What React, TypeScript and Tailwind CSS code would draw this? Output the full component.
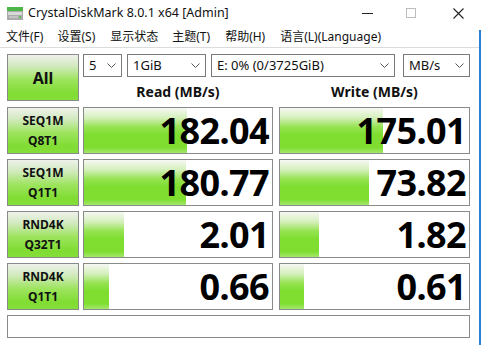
import React from 'react';

const fillBg =
  'bg-[linear-gradient(to_bottom,#f6f8f3_0%,#d4f0bb_22%,#96e352_42%,#7edd2e_60%,#80de31_88%,#a4e86c_100%)]';
const labelBg =
  'bg-[linear-gradient(to_bottom,#eef1eb_0%,#d2eabe_25%,#9de45e_55%,#80dc32_85%,#86de3a_100%)]';

const rows = [
  { l1: 'SEQ1M', l2: 'Q8T1', read: '182.04', rw: 103, write: '175.01', ww: 103 },
  { l1: 'SEQ1M', l2: 'Q1T1', read: '180.77', rw: 102, write: '73.82', ww: 89 },
  { l1: 'RND4K', l2: 'Q32T1', read: '2.01', rw: 40, write: '1.82', ww: 39 },
  { l1: 'RND4K', l2: 'Q1T1', read: '0.66', rw: 25, write: '0.61', ww: 24 },
];

function Chevron() {
  return (
    <svg width="9" height="6" viewBox="0 0 9 6" className="shrink-0">
      <polyline points="0.5,0.5 4.5,4.5 8.5,0.5" fill="none" stroke="#555" strokeWidth="1" />
    </svg>
  );
}

function Combo({ value, className }: { value: string; className: string }) {
  return (
    <div
      className={`h-[23px] border border-[#7a7a7a] bg-white flex items-center justify-between pl-[5px] pr-[5px] text-[13px] text-[#111] ${className}`}
    >
      <span>{value}</span>
      <Chevron />
    </div>
  );
}

function Result({ value, fill, className }: { value: string; fill: number; className: string }) {
  return (
    <div className={`h-[47px] border border-[#8a8a8a] bg-white flex ${className}`}>
      <div className="relative flex-1 flex items-center justify-end pr-[3px]">
        <div className={`absolute left-0 top-0 bottom-0 ${fillBg}`} style={{ width: fill }} />
        <span className="relative font-bold text-[36px] leading-none tracking-[-0.6px] text-black">
          {value}
        </span>
      </div>
    </div>
  );
}

export default function App() {
  return (
    <div className="w-[481px] h-[345px] flex bg-white overflow-hidden font-['Noto_Sans','Noto_Sans_CJK_SC',sans-serif] text-[#111]">
      <div className="w-[479px] flex flex-col">
        {/* title bar */}
        <div className="h-[26px] flex items-center shrink-0">
          <svg width="16" height="13" viewBox="0 0 16 13" className="ml-[7px]">
            <rect x="0" y="0" width="16" height="4" fill="#4cb648" />
            <rect x="0" y="4" width="16" height="9" fill="#a9aaa9" />
            <rect x="1" y="5" width="14" height="3" fill="#d7d8d7" />
            <rect x="2" y="9" width="9" height="2" fill="#c2c3c2" />
            <rect x="12" y="9" width="2" height="2" fill="#5dc45a" />
          </svg>
          <span className="ml-[5px] text-[12.5px]">CrystalDiskMark 8.0.1 x64 [Admin]</span>
          <div className="ml-auto flex items-center">
            <div className="w-[11px] h-px bg-[#222]" />
            <div className="ml-[33px] w-[10px] h-[10px] border border-[#bdbdbd]" />
            <svg width="11" height="11" viewBox="0 0 11 11" className="ml-[37px] mr-[15px]">
              <path d="M0.5 0.5 L10.5 10.5 M10.5 0.5 L0.5 10.5" stroke="#222" strokeWidth="1.1" />
            </svg>
          </div>
        </div>

        {/* menu bar */}
        <div className="h-[22px] flex items-center text-[12px] border-b border-[#dcdcdc] shrink-0 pl-[6px]">
          <span>文件(F)</span>
          <span className="ml-[14px]">设置(S)</span>
          <span className="ml-[15px]">显示状态</span>
          <span className="ml-[14px]">主题(T)</span>
          <span className="ml-[15px]">帮助(H)</span>
          <span className="ml-[15px]">语言(L)(Language)</span>
        </div>

        {/* main */}
        <div className="flex flex-col gap-[5px] pl-[7px] pt-[6px]">
          <div className="flex">
            <div
              className={`w-[72px] h-[47px] border border-[#8a8a8a] ${labelBg} flex items-center justify-center font-bold text-[16px]`}
            >
              All
            </div>
            <div className="ml-[4px] flex flex-col">
              <div className="flex">
                <Combo value="5" className="w-[39px]" />
                <Combo value="1GiB" className="w-[79px] ml-[5px]" />
                <Combo value="E: 0% (0/3725GiB)" className="w-[184px] ml-[5px]" />
                <Combo value="MB/s" className="w-[67px] ml-[8px]" />
              </div>
              <div className="flex pt-[5px] font-bold text-[14px] leading-[20px]">
                <div className="w-[190px] text-center">Read (MB/s)</div>
                <div className="w-[191px] ml-[6px] text-center">Write (MB/s)</div>
              </div>
            </div>
          </div>

          {rows.map((r, i) => (
            <div key={i} className="flex">
              <div
                className={`w-[72px] h-[47px] border border-[#8a8a8a] ${labelBg} flex flex-col items-center justify-center font-bold text-[12px] leading-[20px]`}
              >
                <span>{r.l1}</span>
                <span>{r.l2}</span>
              </div>
              <Result value={r.read} fill={r.rw} className="w-[190px] ml-[4px]" />
              <Result value={r.write} fill={r.ww} className="w-[191px] ml-[6px]" />
            </div>
          ))}

          <div className="w-[463px] h-[23px] border border-[#8a8a8a] bg-white" />
        </div>
      </div>
      <div className="w-[2px] flex flex-col">
        <div className="h-[30px]" />
        <div className="flex-1 bg-[#2a7fd4]" />
      </div>
    </div>
  );
}
